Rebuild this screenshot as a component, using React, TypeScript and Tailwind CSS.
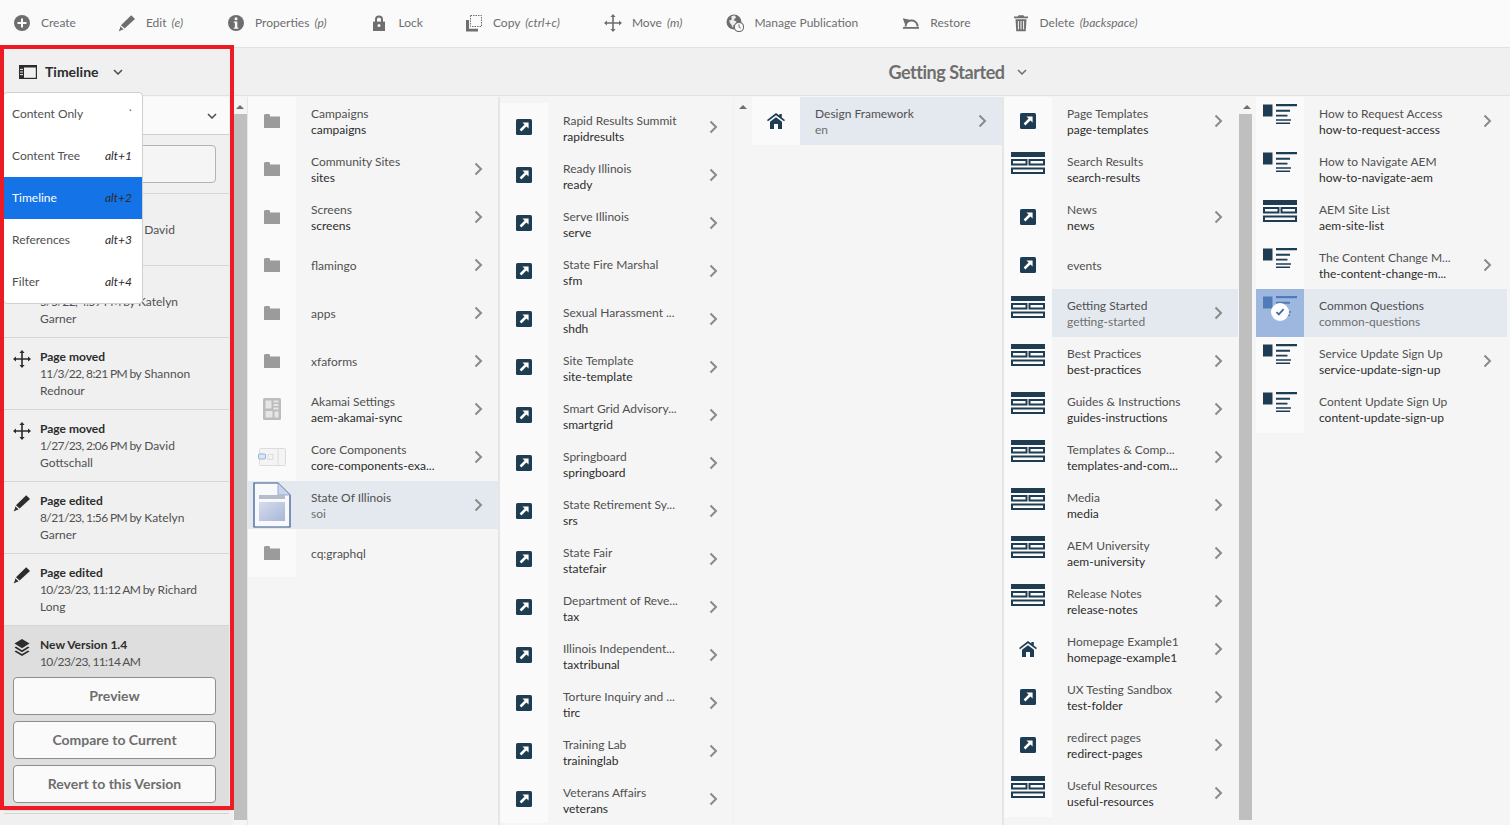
import React from "react";

const gray = "#6e6e6e";
const navy = "#1e3d52";

function Create() {
  return (
    <svg width="18" height="18" viewBox="0 0 18 18">
      <circle cx="9" cy="9" r="8" fill={gray} />
      <path d="M8 4.5h2V8h3.5v2H10v3.5H8V10H4.5V8H8z" fill="#fafafa" />
    </svg>
  );
}
function Pencil({ color = gray }: { color?: string }) {
  return (
    <svg width="18" height="18" viewBox="0 0 18 18">
      <path d="M13.2 1.2 17 5 6.6 14.6 3 11.2z" fill={color} />
      <path d="M2.4 12.2 5.6 15.4 1.4 16.8z" fill={color} />
      <path d="M1.6 15.2 2.6 16.4 0.8 17.4z" fill={color} />
    </svg>
  );
}
function Info() {
  return (
    <svg width="18" height="18" viewBox="0 0 18 18">
      <circle cx="9" cy="9" r="8" fill={gray} />
      <circle cx="9" cy="4.8" r="1.5" fill="#fafafa" />
      <path d="M6.8 7.5h3.5v6h1.1v1.3H6.8v-1.3h1.1V8.8H6.8z" fill="#fafafa" />
    </svg>
  );
}
function Lock() {
  return (
    <svg width="18" height="18" viewBox="0 0 18 18">
      <path d="M4 8V5.5a4 4 0 0 1 8 0V8h-2V5.5a2 2 0 0 0-4 0V8z" fill={gray} />
      <path d="M2 7.6h12V17H2z" fill={gray} />
      <circle cx="8" cy="11.5" r="1.5" fill="#fafafa" />
    </svg>
  );
}
function Copy() {
  return (
    <svg width="18" height="18" viewBox="0 0 18 18">
      <rect x="5.5" y="1.5" width="11" height="11" fill="none" stroke={gray} strokeWidth="1" strokeDasharray="1.5 1" />
      <path d="M1 6h3v8.8h9V17.5H1z" fill={gray} />
    </svg>
  );
}
function Move({ color = gray }: { color?: string }) {
  return (
    <svg width="18" height="18" viewBox="0 0 18 18">
      <path
        d="M9 0l2.6 3H9.8v5.2H15V6.4l3 2.6-3 2.6V9.8H9.8V15h1.8L9 18l-2.6-3h1.8V9.8H3v1.8L0 9l3-2.6v1.8h5.2V3H6.4z"
        fill={color}
      />
    </svg>
  );
}
function Globe() {
  return (
    <svg width="18" height="18" viewBox="0 0 18 18">
      <circle cx="8" cy="8" r="7.5" fill={gray} />
      <path d="M5.5 2l3.5-.5 1 2-2.5 2.5 3 1.5-1 3-2 .5-.5 3-1.5-3-1.5-2-1-2.5L5.5 6z" fill="#fafafa" opacity="0.9" />
      <circle cx="13" cy="13" r="4.6" fill="#fafafa" stroke={gray} strokeWidth="1.1" />
      <path d="M13 10.4V13l1.8 1.2" fill="none" stroke={gray} strokeWidth="1" />
    </svg>
  );
}
function Restore() {
  return (
    <svg width="18" height="18" viewBox="0 0 18 18">
      <path d="M3.6 12.5a6 6 0 0 1 11.8-1.5l.3 1.5" fill="none" stroke={gray} strokeWidth="2" />
      <path d="M.8 4.2 7.6 5.8 3 10.5z" fill={gray} />
      <path d="M1 13h16v1.8H1z" fill={gray} />
    </svg>
  );
}
function Trash() {
  return (
    <svg width="17" height="18" viewBox="0 0 17 18">
      <path d="M5.5 1.2h5l.6 1.3H15v1.8H1V2.5h3.9z" fill={gray} />
      <path d="M2.5 5.2h11l-.8 12H3.3z" fill={gray} />
      <path d="M5.4 7v8.4M8 7v8.4M10.6 7v8.4" stroke="#fafafa" strokeWidth="1" />
    </svg>
  );
}
function Chevron({ color = "#4b4b4b" }: { color?: string }) {
  return (
    <svg width="10" height="6" viewBox="0 0 10 6">
      <path d="M1 1l4 4 4-4" fill="none" stroke={color} strokeWidth="1.5" />
    </svg>
  );
}
function RowChevron() {
  return (
    <svg width="9" height="14" viewBox="0 0 9 14" className="shrink-0">
      <path d="M1.5 1.5 7 7l-5.5 5.5" fill="none" stroke="#8a8a8a" strokeWidth="2" />
    </svg>
  );
}
function PanelIcon() {
  return (
    <svg width="18" height="14" viewBox="0 0 18 14">
      <rect x="0.6" y="0.6" width="16.8" height="12.8" fill="none" stroke="#2c2c2c" strokeWidth="1.2" />
      <path d="M0 0h18v2.6H0zM0 0h5v14H0z" fill="#2c2c2c" />
      <path d="M1 4.4h3M1 7h3M1 9.6h3" stroke="#f0f0f0" strokeWidth="1" />
    </svg>
  );
}
function Layers() {
  return (
    <svg width="18" height="18" viewBox="0 0 18 18">
      <path d="M9 1l7.5 4.6L9 10.2 1.5 5.6z" fill="#2c2c2c" />
      <path d="M3 8.6 9 12.2l6-3.6 1.5 1L9 14.2 1.5 9.6z" fill="#2c2c2c" />
      <path d="M3 12.4 9 16l6-3.6 1.5 1L9 17.9l-7.5-4.5z" fill="#2c2c2c" />
    </svg>
  );
}
function Folder() {
  return (
    <svg width="16" height="14" viewBox="0 0 16 14">
      <path d="M0 3V1.2L.8 0h4.4l.8 1.2V2.4H16V14H0z" fill="#9b9b9b" />
    </svg>
  );
}
function LinkIcon() {
  return (
    <svg width="16" height="16" viewBox="0 0 16 16">
      <rect width="16" height="16" rx="1.5" fill={navy} />
      <path d="M6.4 3.4h6.2v6.2l-2.2-2.2-5 5-1.8-1.8 5-5z" fill="#fff" />
    </svg>
  );
}
function Template() {
  return (
    <svg width="34" height="24" viewBox="0 0 34 24">
      <path d="M0 1h34v5H0z" fill={navy} />
      <path d="M1 9h14.5v4.5H1zM18.5 9H33v4.5H18.5zM1 17.5h32V22H1z" fill="none" stroke={navy} strokeWidth="2" />
    </svg>
  );
}
function ListIcon({ muted }: { muted?: boolean }) {
  const c = muted ? "#4f7cb8" : navy;
  return (
    <svg width="34" height="24" viewBox="0 0 34 24">
      <path d="M0 1.5h9.5v12H0z" fill={c} />
      <path d="M13 1h21v2.2H13zM13 6.8h14v1.9H13zM13 11.8h11.5v1.7H13zM13 16.2h15v1.6H13zM13 19.4h14v1.7H13z" fill={c} />
    </svg>
  );
}
function Home() {
  return (
    <svg width="18" height="16" viewBox="0 0 18 16">
      <path
        d="M9 0l3.4 2.6V1h2.4v3.4L18 7l-1 1.3L9 2.3 1 8.3 0 7zM3 8.8 9 4.2l6 4.6V16h-4v-5H7v5H3z"
        fill={navy}
      />
    </svg>
  );
}
function Akamai() {
  return (
    <svg width="18" height="22" viewBox="0 0 18 22">
      <rect width="18" height="22" rx="1.5" fill="#bcbcbc" />
      <path d="M2.5 2.5h6v8h-6zM10.5 2.5h5v2h-5zM10.5 6h5v2h-5zM10.5 9.5h5v2h-5zM2.5 13h7v6.5h-7zM11.5 13.5h4v6h-4z" fill="#e6e6e6" />
    </svg>
  );
}
function Core() {
  return (
    <svg width="28" height="18" viewBox="0 0 28 18">
      <rect x="1.5" y="0.5" width="26" height="17" rx="1" fill="#f4f4f4" stroke="#dcdcdc" />
      <path d="M20 1v16" stroke="#dcdcdc" />
      <rect x="10" y="6.5" width="5" height="5" fill="none" stroke="#dcdcdc" />
      <rect x="0.5" y="6" width="7" height="5" rx="1" fill="#dbe6f5" stroke="#93b2dc" />
    </svg>
  );
}
function PageThumb() {
  return (
    <svg width="38" height="46" viewBox="0 0 38 46">
      <defs>
        <linearGradient id="pg" x1="0" y1="0" x2="1" y2="1">
          <stop offset="0" stopColor="#d5dcec" />
          <stop offset="1" stopColor="#a9b6d8" />
        </linearGradient>
      </defs>
      <path d="M1 1h24l12 12v32H1z" fill="#f7f9fd" stroke="#34548c" strokeWidth="1.2" />
      <path d="M25 1v12h12z" fill="#c8d6ec" stroke="#8aa0c8" strokeWidth="0.8" />
      <path d="M6 13h26v4H6z" fill="#b6bccb" />
      <path d="M6 20h26v19H6z" fill="url(#pg)" />
    </svg>
  );
}
function Selected() {
  return (
    <div className="relative flex h-12 w-12 items-start justify-center bg-[#9db7de] pt-1.5">
      <ListIcon muted />
      <span className="absolute left-3.75 top-3.5 flex h-4.5 w-4.5 items-center justify-center rounded-full bg-white">
        <svg width="10" height="8" viewBox="0 0 12 10">
          <path d="M1.5 5 4.5 8l6-6.5" fill="none" stroke="#3f68a6" strokeWidth="2.2" />
        </svg>
      </span>
    </div>
  );
}

type Row = { icon: React.ReactNode; top?: boolean; a: string; b?: string; more?: boolean; sel?: boolean };

const f = <Folder />;
const l = <LinkIcon />;
const t = <Template />;
const li = <ListIcon />;

const col1: Row[] = [
  { icon: f, a: "Campaigns", b: "campaigns" },
  { icon: f, a: "Community Sites", b: "sites", more: true },
  { icon: f, a: "Screens", b: "screens", more: true },
  { icon: f, a: "flamingo", more: true },
  { icon: f, a: "apps", more: true },
  { icon: f, a: "xfaforms", more: true },
  { icon: <Akamai />, a: "Akamai Settings", b: "aem-akamai-sync", more: true },
  { icon: <Core />, a: "Core Components", b: "core-components-exa...", more: true },
  { icon: <PageThumb />, a: "State Of Illinois", b: "soi", more: true, sel: true },
  { icon: f, a: "cq:graphql" },
];
const col2: Row[] = [
  ["Rapid Results Summit", "rapidresults"],
  ["Ready Illinois", "ready"],
  ["Serve Illinois", "serve"],
  ["State Fire Marshal", "sfm"],
  ["Sexual Harassment ...", "shdh"],
  ["Site Template", "site-template"],
  ["Smart Grid Advisory...", "smartgrid"],
  ["Springboard", "springboard"],
  ["State Retirement Sy...", "srs"],
  ["State Fair", "statefair"],
  ["Department of Reve...", "tax"],
  ["Illinois Independent...", "taxtribunal"],
  ["Torture Inquiry and ...", "tirc"],
  ["Training Lab", "traininglab"],
  ["Veterans Affairs", "veterans"],
].map(([a, b]) => ({ icon: l, a, b, more: true }));
const col4: Row[] = [
  { icon: l, a: "Page Templates", b: "page-templates", more: true },
  { icon: t, top: true, a: "Search Results", b: "search-results" },
  { icon: l, a: "News", b: "news", more: true },
  { icon: l, a: "events" },
  { icon: t, top: true, a: "Getting Started", b: "getting-started", more: true, sel: true },
  { icon: t, top: true, a: "Best Practices", b: "best-practices", more: true },
  { icon: t, top: true, a: "Guides & Instructions", b: "guides-instructions", more: true },
  { icon: t, top: true, a: "Templates & Comp...", b: "templates-and-com...", more: true },
  { icon: t, top: true, a: "Media", b: "media", more: true },
  { icon: t, top: true, a: "AEM University", b: "aem-university", more: true },
  { icon: t, top: true, a: "Release Notes", b: "release-notes", more: true },
  { icon: <Home />, a: "Homepage Example1", b: "homepage-example1", more: true },
  { icon: l, a: "UX Testing Sandbox", b: "test-folder", more: true },
  { icon: l, a: "redirect pages", b: "redirect-pages", more: true },
  { icon: t, top: true, a: "Useful Resources", b: "useful-resources", more: true },
];
const col5: Row[] = [
  { icon: li, top: true, a: "How to Request Access", b: "how-to-request-access", more: true },
  { icon: li, top: true, a: "How to Navigate AEM", b: "how-to-navigate-aem" },
  { icon: t, top: true, a: "AEM Site List", b: "aem-site-list" },
  { icon: li, top: true, a: "The Content Change M...", b: "the-content-change-m...", more: true },
  { icon: <Selected />, a: "Common Questions", b: "common-questions", sel: true },
  { icon: li, top: true, a: "Service Update Sign Up", b: "service-update-sign-up", more: true },
  { icon: li, top: true, a: "Content Update Sign Up", b: "content-update-sign-up" },
];

function ColRow({ r, low }: { r: Row; low?: boolean }) {
  return (
    <div className={`flex h-12 shrink-0 items-center ${r.sel ? "bg-[#e4e9f0]" : ""}`}>
      {r.icon && (r.icon as React.ReactElement).type === Selected ? (
        r.icon
      ) : r.icon && (r.icon as React.ReactElement).type === PageThumb ? (
        <div className="flex h-12 w-12 shrink-0 items-center justify-center">{r.icon}</div>
      ) : (
        <div
          className={`flex h-12 w-12 shrink-0 justify-center bg-[#fafafa] ${r.top ? "items-start pt-1.5" : "items-center"}`}
        >
          {r.icon}
        </div>
      )}
      <div
        className={`flex min-w-0 flex-1 flex-col whitespace-nowrap pl-3.75 text-xs leading-4 ${low ? "pt-1" : "pt-0.5"}`}
      >
        <span className="text-[#505050]">{r.a}</span>
        {r.b && <span className={r.sel ? "text-[#6e6e6e]" : "text-[#2c2c2c]"}>{r.b}</span>}
      </div>
      {r.more && (
        <div className="flex w-10 shrink-0 justify-center">
          <RowChevron />
        </div>
      )}
    </div>
  );
}

function Scrollbar({ thumb, w, bar }: { thumb?: boolean; w: string; bar?: string }) {
  return (
    <div className={`relative flex shrink-0 flex-col bg-[#f5f5f5] ${w}`}>
      <div className="flex h-4 items-center justify-center">
        <div className="mt-1 h-0 w-0 border-x-4 border-b-4 border-x-transparent border-b-[#6e6e6e]" />
      </div>
      {thumb && <div className={`mt-px h-[706px] bg-[#bfbfbf] ${bar}`} />}
    </div>
  );
}

const moved = <Move color="#2c2c2c" />;
const edited = <Pencil color="#2c2c2c" />;
const history = [
  { icon: moved, title: "Page moved", date: "7/27/22, 2:06 PM by", name: "David", rest: "Gottschall" },
  { icon: moved, title: "Page edited", date: "5/5/22, 4:59 PM by", name: "Katelyn", rest: "Garner" },
  { icon: moved, title: "Page moved", date: "11/3/22, 8:21 PM by", name: "Shannon", rest: "Rednour" },
  { icon: moved, title: "Page moved", date: "1/27/23, 2:06 PM by", name: "David", rest: "Gottschall" },
  { icon: edited, title: "Page edited", date: "8/21/23, 1:56 PM by", name: "Katelyn", rest: "Garner" },
  { icon: edited, title: "Page edited", date: "10/23/23, 11:12 AM by", name: "Richard", rest: "Long" },
];

const tools: [React.ReactNode, string, string?, string?][] = [
  [<Create />, "Create", undefined, "-mr-0.5"],
  [<Pencil />, "Edit", "(e)"],
  [<Info />, "Properties", "(p)"],
  [<Lock />, "Lock", undefined, "-mr-0.5"],
  [<Copy />, "Copy", "(ctrl+c)"],
  [<Move />, "Move", "(m)"],
  [<Globe />, "Manage Publication"],
  [<Restore />, "Restore", undefined, "-mr-0.5"],
  [<Trash />, "Delete", "(backspace)"],
];

const menu: [string, string, boolean?][] = [
  ["Content Only", "`"],
  ["Content Tree", "alt+1"],
  ["Timeline", "alt+2", true],
  ["References", "alt+3"],
  ["Filter", "alt+4"],
];

function HistoryButton({ children }: { children: React.ReactNode }) {
  return (
    <button className="h-[38px] rounded border border-[#8e8e8e] bg-[#fafafa] text-sm font-bold text-[#6e6e6e]">
      {children}
    </button>
  );
}

export default function App() {
  return (
    <div
      className="relative flex h-[825px] w-[1510px] flex-col overflow-hidden bg-[#f5f5f5]"
      style={{ fontFamily: "Lato, 'Liberation Sans', sans-serif" }}
    >
      <div className="flex h-12 shrink-0 items-center gap-11 border-b border-[#e1e1e1] bg-[#fafafa] pb-0.5 pl-3.25 text-xs text-[#6e6e6e]">
        {tools.map(([icon, label, key, nudge]) => (
          <div key={label} className={`flex items-center gap-2.5 ${nudge ?? ""}`}>
            {icon}
            <span>
              {label} {key && <i className="ml-0.5">{key}</i>}
            </span>
          </div>
        ))}
      </div>

      <div className="flex h-12 shrink-0 items-center border-b border-[#e1e1e1] bg-[#f0f0f0]">
        <div className="flex w-[233px] items-center gap-2 pl-4.75 text-sm font-bold text-[#2c2c2c]">
          <PanelIcon />
          <span>Timeline</span>
          <span className="ml-1.5">
            <Chevron />
          </span>
        </div>
        <div className="flex flex-1 items-center justify-center gap-3 pl-43 text-lg font-bold tracking-tight text-[#6e6e6e]">
          <span>Getting Started</span>
          <Chevron color="#6e6e6e" />
        </div>
      </div>

      <div className="flex min-h-0 flex-1 pt-px">
        <div className="flex w-[233px] shrink-0 flex-col bg-[#f0f0f0] pl-1 pr-1">
          <div className="flex h-[38px] shrink-0 items-center justify-end border-b border-[#cfcfcf] bg-[#fafafa] pr-3">
            <Chevron />
          </div>
          <div className="flex h-[59px] shrink-0 items-center border-b border-[#d5d5d5] pl-2.25 pr-3.25">
            <div className="h-[38px] w-full rounded border border-[#b3b3b3] bg-[#f5f5f5]" />
          </div>
          {history.map((h, i) => (
            <div
              key={i}
              className="flex h-[72px] shrink-0 gap-1.75 border-b border-[#d5d5d5] pl-2.25 pt-2.5 text-xs leading-[17px]"
            >
              <div className="w-5 shrink-0 pt-0.5">{h.icon}</div>
              <div className="min-w-0 whitespace-nowrap text-[#505050]">
                <div className="font-bold text-[#2c2c2c]">{h.title}</div>
                <div>
                  <span className="tracking-tighter">{h.date}</span> {h.name}
                </div>
                <div>{h.rest}</div>
              </div>
            </div>
          ))}
          <div className="flex h-[185px] shrink-0 flex-col bg-[#dedede] pl-2.25 pr-3.25 pt-2.5 text-xs leading-[17px]">
            <div className="flex gap-1.75">
              <div className="w-5 shrink-0 pt-0.5">
                <Layers />
              </div>
              <div className="text-[#505050]">
                <div className="font-bold text-[#2c2c2c]">New Version 1.4</div>
                <div className="tracking-tighter">10/23/23, 11:14 AM</div>
              </div>
            </div>
            <div className="mt-1.75 flex flex-col gap-1.5">
              <HistoryButton>Preview</HistoryButton>
              <HistoryButton>Compare to Current</HistoryButton>
              <HistoryButton>Revert to this Version</HistoryButton>
            </div>
          </div>
          <div className="mt-0.5 border-t border-[#d5d5d5]" />
        </div>

        <Scrollbar thumb w="w-3.5" bar="ml-px" />

        <div className="flex w-[253px] shrink-0 flex-col border-l border-r-2 border-[#e6e6e6]">
          {col1.map((r) => (
            <ColRow key={r.a} r={r} />
          ))}
        </div>
        <div className="flex w-[234px] shrink-0 flex-col overflow-hidden border-r border-[#f0f0f0] pt-1.5">
          {col2.map((r) => (
            <ColRow key={r.a} r={r} low />
          ))}
        </div>
        <Scrollbar w="w-4.5" />
        <div className="flex w-[252px] shrink-0 flex-col border-r-2 border-[#e6e6e6]">
          <ColRow r={{ icon: <Home />, a: "Design Framework", b: "en", more: true, sel: true }} />
        </div>
        <div className="flex w-[234px] shrink-0 flex-col">
          {col4.map((r) => (
            <ColRow key={r.a} r={r} />
          ))}
        </div>
        <Scrollbar thumb w="w-4.5" bar="ml-px mr-1" />
        <div className="flex w-[251px] shrink-0 flex-col">
          {col5.map((r) => (
            <ColRow key={r.a} r={r} />
          ))}
        </div>
      </div>

      <div className="absolute left-0.75 top-[92px] flex w-[140px] flex-col rounded-sm border border-[#cfcfcf] bg-white text-xs text-[#505050]">
        {menu.map(([a, b, sel]) => (
          <div
            key={a}
            className={`flex h-[42px] items-center justify-between pl-2 pr-2.5 ${sel ? "bg-[#1473e6] text-white" : ""}`}
          >
            <span>{a}</span>
            <i className="text-[#2c2c2c]">{b}</i>
          </div>
        ))}
      </div>

      <div className="pointer-events-none absolute left-0 top-[45px] h-[765px] w-[234px] border-4 border-[#ed1c24]" />
    </div>
  );
}
